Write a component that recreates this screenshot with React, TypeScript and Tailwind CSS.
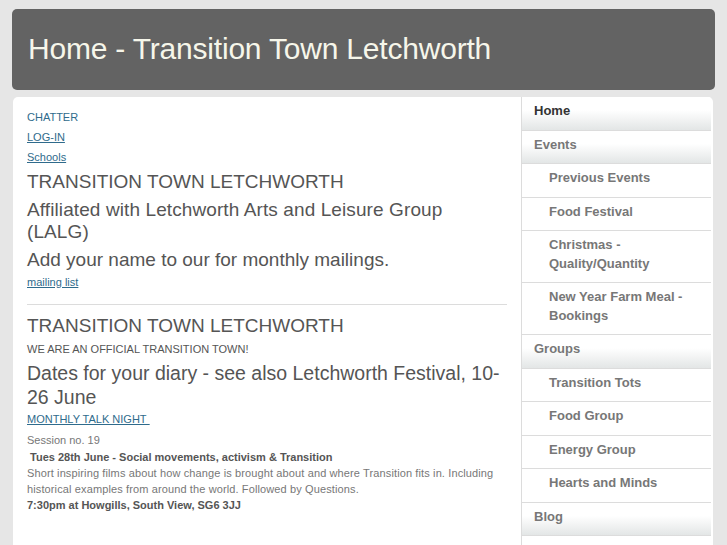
const nav: { label: string[]; level: 0 | 1; active?: boolean }[] = [
  { label: ["Home"], level: 0, active: true },
  { label: ["Events"], level: 0 },
  { label: ["Previous Events"], level: 1 },
  { label: ["Food Festival"], level: 1 },
  { label: ["Christmas -", "Quality/Quantity"], level: 1 },
  { label: ["New Year Farm Meal -", "Bookings"], level: 1 },
  { label: ["Groups"], level: 0 },
  { label: ["Transition Tots"], level: 1 },
  { label: ["Food Group"], level: 1 },
  { label: ["Energy Group"], level: 1 },
  { label: ["Hearts and Minds"], level: 1 },
  { label: ["Blog"], level: 0 },
];

export default function App() {
  return (
    <div className="h-[545px] overflow-hidden bg-[#e6e6e6] px-[12px] pt-[9px] font-['Liberation_Sans',Arial,sans-serif]">
      <header className="flex h-[81px] items-center rounded-[5px] bg-[#636363] px-[16px] pb-[2px]">
        <h1 className="text-[30px] leading-none tracking-[-0.2px] text-[#f6f6ea]">Home - Transition Town Letchworth</h1>
      </header>

      <div className="mt-[7px] ml-[1px] mr-[2px] flex h-[460px] overflow-hidden rounded-t-[5px] bg-white">
        <main className="w-[508px] px-[14px] pt-[10px] text-[#666]">
          <div className="text-[11px] leading-[20px] text-[#2f6b8c]">
            <p>CHATTER</p>
            <p><a className="underline">LOG-IN</a></p>
            <p><a className="underline">Schools</a></p>
          </div>
          <h2 className="mt-[4px] text-[19px] leading-[22px] text-[#555]">TRANSITION TOWN LETCHWORTH</h2>
          <h2 className="mt-[6px] text-[19px] leading-[22px] tracking-[0.1px] text-[#555]">Affiliated with Letchworth Arts and Leisure Group (LALG)</h2>
          <h2 className="mt-[6px] text-[19px] leading-[22px] text-[#555]">Add your name to our for monthly mailings.</h2>
          <p className="mt-[1px] text-[11px] leading-[20px]"><a className="text-[#2f6b8c] underline">mailing list</a></p>
          <hr className="mt-[12px] border-t border-[#dcdcdc]" />
          <h2 className="mt-[10px] text-[19px] leading-[22px] text-[#555]">TRANSITION TOWN LETCHWORTH</h2>
          <p className="mt-[4px] text-[11px] leading-[16px] text-[#555]">WE ARE AN OFFICIAL TRANSITION TOWN!</p>
          <h2 className="mt-[4px] text-[19.5px] leading-[24px] text-[#555]">Dates for your diary - see also Letchworth Festival, 10-<wbr />26 June</h2>
          <p className="text-[11px] leading-[20px]"><a className="text-[#2f6b8c] underline">MONTHLY TALK NIGHT&nbsp;</a></p>
          <div className="mt-[3px] text-[11px] leading-[16.5px] text-[#777]">
            <p>Session no. 19</p>
            <p className="font-bold text-[#555]">&nbsp;Tues 28th June - Social movements, activism &amp; Transition</p>
            <p className="leading-[16px] tracking-[0.12px]">Short inspiring films about how change is brought about and where Transition fits in. Including historical examples from around the world. Followed by Questions.</p>
            <p className="font-bold text-[#555]">7:30pm at Howgills, South View, SG6 3JJ</p>
          </div>
        </main>

        <nav className="w-[190px] border-l border-[#dcdcdc]">
          {nav.map((item, i) => (
            <div
              key={i}
              className={
                item.level === 0
                  ? "border-b border-[#dcdcdc] bg-gradient-to-b from-white from-40% to-[#e3e6e6] px-[12px] pt-[5px] pb-[9px] text-[13px] font-bold leading-[18.5px]"
                  : "border-b border-[#dcdcdc] bg-white pl-[27px] pr-[8px] pt-[5px] pb-[9px] text-[13px] font-bold leading-[18.5px]"
              }
            >
              {item.label.map((l) => (
                <div key={l}>
                  <span className={item.active ? "text-[#333]" : "text-[#777]"}>{l}</span>
                </div>
              ))}
            </div>
          ))}
          <div className="h-[40px] bg-white" />
        </nav>
      </div>
    </div>
  );
}
